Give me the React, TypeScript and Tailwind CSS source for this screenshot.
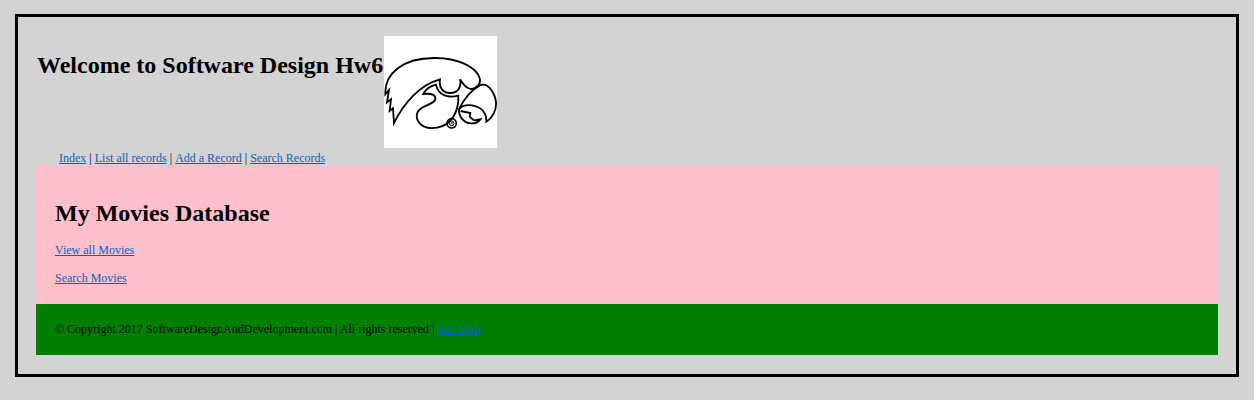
import React from "react";

const linkClass = "text-[#0563c1] underline";

const navLinks = ["Index", "List all records", "Add a Record", "Search Records"];

function HawkLogo() {
  return (
    <svg
      role="img"
      aria-label="Hawk logo"
      viewBox="24 18 339 336"
      className="h-28 w-[113px] shrink-0 bg-white"
      fill="none"
      stroke="#000"
      strokeWidth="5.5"
      strokeLinejoin="miter"
    >
      <path d="M54 279 L51 235 L41 243 L45 208 L33 217 L39 180 L28 193 C25 130 82 84 174 84 C246 83 302 112 311 145 C314 154 312 160 306 166 C298 177 286 179 276 174 C264 169 259 157 252 148 C258 174 243 189 223 189 C201 189 188 174 192 148 C132 164 84 218 54 279 Z" />
      <path d="M180 164 C161 169 147 181 142 192 C158 190 174 192 178 202 C182 214 164 222 146 229 C121 239 117 259 128 276 C138 291 159 297 184 293 C224 286 249 247 247 197 C215 205 187 196 180 164 Z" />
      <path d="M249 238 C265 204 286 180 314 165 C337 158 356 188 360 216 C362 241 349 264 331 275 C332 246 314 230 288 226 C271 224 256 228 249 238 Z" />
      <path d="M249 236 C248 258 261 279 285 280 C297 281 307 276 313 268 L294 271 L281 260 L283 249 L254 243" />
      <circle cx="227" cy="280" r="14" strokeWidth="5" />
      <circle cx="227" cy="280" r="7" strokeWidth="3" />
      <path d="M225 284 V277 H229 V280 H225 M227 280 L230 284" strokeWidth="1.5" />
    </svg>
  );
}

export default function App() {
  return (
    <div className="min-h-screen bg-[#d3d3d3] px-[15px] py-3.5 font-['Liberation_Serif',serif] text-xs text-black">
      <div className="border-[3px] border-black px-[18px] py-[19px]">
        <header className="flex items-start">
          <h1 className="px-px pt-[15px] text-2xl leading-7 font-bold">Welcome to Software Design Hw6</h1>
          <HawkLogo />
        </header>
        <nav className="flex h-[17px] items-center gap-[3px] pt-0.5 pl-[23px]">
          {navLinks.map((label, i) => (
            <React.Fragment key={label}>
              {i > 0 && <span>|</span>}
              <a href="#" className={linkClass}>{label}</a>
            </React.Fragment>
          ))}
        </nav>
        <main className="bg-[#ffc0cb] px-[19px] pt-[34px] pb-[18px]">
          <h2 className="text-2xl leading-7 font-bold">My Movies Database</h2>
          <p className="pt-[15px]"><a href="#" className={linkClass}>View all Movies</a></p>
          <p className="pt-3"><a href="#" className={linkClass}>Search Movies</a></p>
        </main>
        <footer className="bg-[#008000] px-[19px] pt-[17px] pb-[18px]">
          <p>
            © Copyright 2017 SoftwareDesignAndDevelopment.com | All rights reserved |{" "}
            <a href="#" className={linkClass}>Site Map</a>
          </p>
        </footer>
      </div>
    </div>
  );
}
